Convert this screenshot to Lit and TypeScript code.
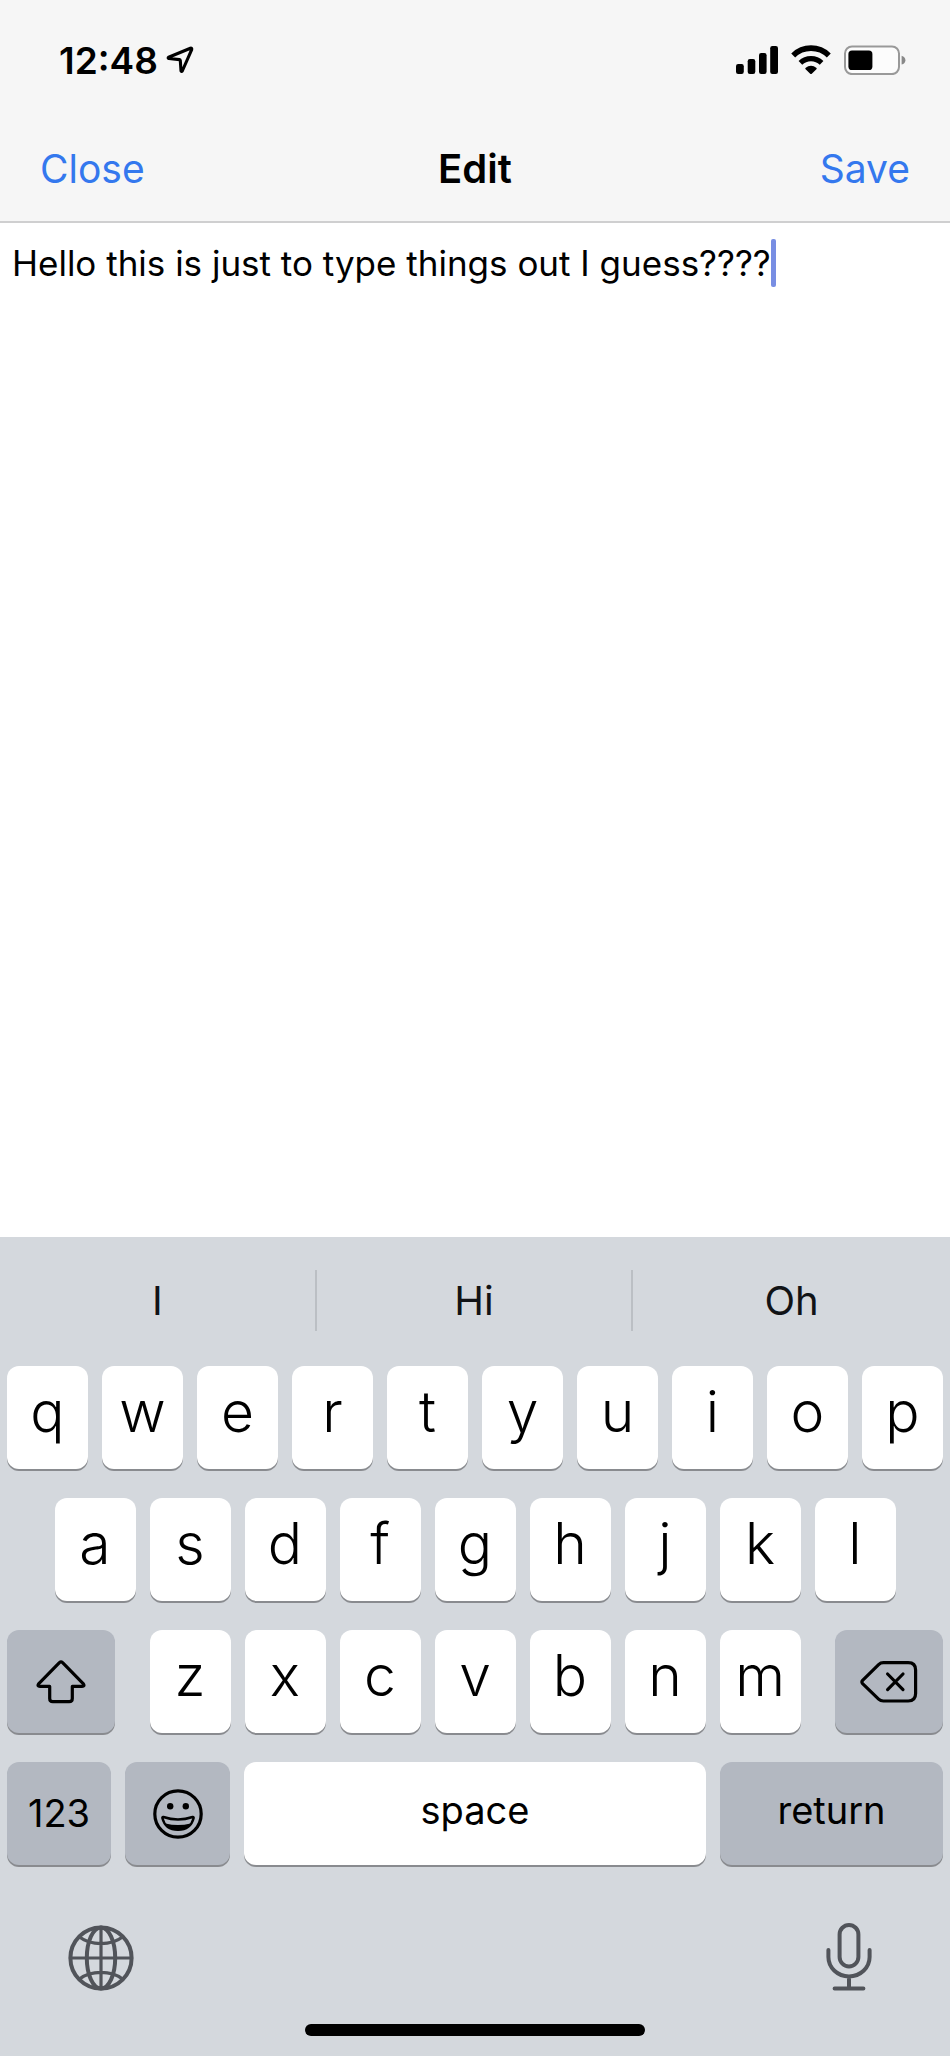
import { LitElement, html, css, svg } from "lit";
import { customElement, property, state } from "lit/decorators.js";

const shiftIcon = svg`<svg class="glyph" width="50" height="44" viewBox="0 0 50 44" aria-hidden="true">
  <path d="M23.4 2.6Q25 1.2 26.6 2.6L47.4 23.8Q49 26.2 46 26.4H36.3V38.5Q36.3 41.6 33.2 41.6H16.8Q13.7 41.6 13.7 38.5V26.4H4Q1 26.2 2.6 23.8Z" />
</svg>`;

const deleteIcon = svg`<svg class="glyph" width="58" height="42" viewBox="0 0 58 42" aria-hidden="true">
  <path d="M2.6 19.4L18.6 3.6Q20.6 1.7 23.4 1.7H48.2Q55.6 1.7 55.6 9.1V32.6Q55.6 40 48.2 40H23.4Q20.6 40 18.6 38.1L2.6 22.6Q1.2 21 2.6 19.4Z" />
  <path d="M27.6 13L43 28.6M43 13L27.6 28.6" />
</svg>`;

const emojiIcon = svg`<svg class="glyph" width="50" height="50" viewBox="0 0 50 50" aria-hidden="true">
  <circle cx="25" cy="25" r="23.2" />
  <circle class="solid" cx="17.2" cy="17.2" r="3.2" />
  <circle class="solid" cx="32.8" cy="17.2" r="3.2" />
  <path class="thin" d="M10.4 28Q25 33 39.6 28Q41 27.7 40.6 29.2Q37.6 40.8 25 40.8Q12.4 40.8 9.4 29.2Q9 27.7 10.4 28Z" />
  <path class="solid" d="M12.4 34.4Q25 37.6 37.6 34.4Q33 41 25 41Q17 41 12.4 34.4Z" />
</svg>`;

@customElement("status-bar")
export class StatusBar extends LitElement {
  static styles = css`
    :host {
      display: flex;
      align-items: center;
      justify-content: space-between;
      height: 112px;
      padding: 4px 44px 0 59px;
    }
    .clock,
    .indicators {
      display: flex;
      align-items: center;
    }
    .clock {
      gap: 8px;
      font-size: 37px;
      font-weight: 600;
    }
    .indicators {
      gap: 13px;
    }
  `;

  @property() time = "";

  render() {
    return html`
      <div class="clock">
        <time>${this.time}</time>
        <svg width="28" height="28" viewBox="0 0 28 28" aria-hidden="true">
          <path d="M24.4 2.2L2.6 11.2Q1.6 12 2.8 12.5L13.6 13.6Q14.2 13.7 14.3 14.4L15 24.8Q15.5 26 16.3 25L25.7 3.6Q26 1.9 24.4 2.2Z"
            fill="none" stroke="#000" stroke-width="3.1" stroke-linejoin="round" />
        </svg>
      </div>
      <div class="indicators">
        <svg width="42" height="30" viewBox="0 0 42 30" role="img" aria-label="Signal">
          <rect x="0" y="19" width="7.8" height="10" rx="2.2" />
          <rect x="11.7" y="14" width="7.6" height="15" rx="2.2" />
          <rect x="23" y="8" width="7.6" height="21" rx="2.2" />
          <rect x="34.2" y="1" width="7.8" height="28" rx="2.2" />
        </svg>
        <svg width="40" height="30" viewBox="0 0 40 30" role="img" aria-label="Wi-Fi">
          <path d="M2.2 10.4A25.4 25.4 0 0 1 37.8 10.4" fill="none" stroke="#000" stroke-width="5.6" />
          <path d="M9.4 17.9A15.2 15.2 0 0 1 30.6 17.9" fill="none" stroke="#000" stroke-width="5.2" />
          <path d="M14.4 23Q20 18.4 25.6 23Q26 23.6 25.4 24.2L20.8 28.8Q20 29.4 19.2 28.8L14.6 24.2Q14 23.6 14.4 23Z" />
        </svg>
        <svg width="62" height="30" viewBox="0 0 62 30" role="img" aria-label="Battery">
          <rect x="1" y="1.5" width="54" height="27.6" rx="7" fill="#fcfcfc" stroke="#999" stroke-width="2" />
          <rect x="4.4" y="5.4" width="24" height="19.6" rx="3.6" />
          <path d="M57.6 10.8Q61.4 12 61.4 15.2Q61.4 18.4 57.6 19.6Z" fill="#888" />
        </svg>
      </div>
    `;
  }
}

@customElement("nav-bar")
export class NavBar extends LitElement {
  static styles = css`
    :host {
      display: grid;
      grid-template-columns: 1fr auto 1fr;
      align-items: center;
      height: 105px;
      padding: 0 40px;
    }
    .title {
      margin: 0;
      font-size: 40px;
      font-weight: 600;
    }
    .action {
      padding: 0;
      border: 0;
      background: none;
      color: #3478ee;
      font: inherit;
      font-size: 39px;
      justify-self: start;
    }
    .primary {
      justify-self: end;
    }
  `;

  @property() heading = "";

  render() {
    return html`
      <button class="action" type="button">Close</button>
      <h1 class="title">${this.heading}</h1>
      <button class="action primary" type="button">Save</button>
    `;
  }
}

@customElement("text-editor")
export class TextEditor extends LitElement {
  static styles = css`
    :host {
      display: flex;
      background: #fff;
    }
    .page {
      flex: 1;
      display: flex;
      align-items: flex-start;
      padding: 16px 12px;
      cursor: text;
    }
    .text {
      field-sizing: content;
      flex: 0 1 auto;
      padding: 0;
      border: 0;
      outline: 0;
      resize: none;
      overflow: hidden;
      background: none;
      color: #000;
      font: inherit;
      font-size: 35px;
      line-height: 48px;
      caret-color: transparent;
    }
    .caret {
      flex: none;
      width: 5px;
      height: 48px;
      border-radius: 2px;
      background: #788ee3;
    }
  `;

  @property() value = "";

  render() {
    return html`
      <label class="page">
        <textarea class="text" rows="1" aria-label="Text" spellcheck="false" .value=${this.value}></textarea>
        <span class="caret"></span>
      </label>
    `;
  }
}

@customElement("soft-keyboard")
export class SoftKeyboard extends LitElement {
  static styles = css`
    :host {
      display: block;
      background: #d4d8dd;
    }
    button {
      margin: 0;
      padding: 0;
      border: 0;
      background: none;
      color: #000;
      font: inherit;
      cursor: pointer;
    }
    .suggestions {
      display: grid;
      grid-template-columns: repeat(3, 1fr);
      align-items: center;
      height: 126px;
    }
    .suggestion {
      height: 61px;
      color: #111316;
      font-size: 40px;
      line-height: 61px;
    }
    .suggestion:not(:last-child) {
      border-right: 2px solid #bbbfc4;
    }
    .keys {
      --gap: 14px;
      display: flex;
      flex-direction: column;
      gap: 29px;
      padding: 3px 7px 0;
    }
    .row,
    .letters {
      display: flex;
      gap: var(--gap);
    }
    .inset {
      padding: 0 calc((100% + var(--gap)) / 20);
    }
    .spread {
      justify-content: space-between;
      gap: 0;
    }
    .letters {
      width: calc((100% + var(--gap)) * 0.7 - var(--gap));
    }
    .bottom {
      display: grid;
      grid-template-columns: 104fr 105fr 462fr 223fr;
    }
    .key {
      display: flex;
      flex: 1 1 0;
      align-items: center;
      justify-content: center;
      min-width: 0;
      height: 103px;
      border-radius: 12px;
      background: #fff;
      box-shadow: 0 2px 0 #898b8f;
    }
    .letter {
      padding-bottom: 12px;
      font-size: 57px;
      font-weight: 350;
    }
    .word {
      padding-bottom: 8px;
      font-size: 38px;
    }
    .digits {
      padding-bottom: 2px;
      font-size: 38px;
    }
    .special {
      background: #b3b8c1;
    }
    .side {
      flex: none;
      width: 11.5%;
    }
    .glyph {
      fill: none;
      stroke: #000;
      stroke-width: 3.2;
      stroke-linecap: round;
      stroke-linejoin: round;
    }
    .glyph .thin {
      stroke-width: 2.4;
    }
    .glyph .solid {
      fill: #000;
      stroke: none;
    }
    .tools {
      display: flex;
      align-items: center;
      justify-content: space-between;
      height: 70px;
      padding: 58px 78px 0 68px;
    }
    .tool {
      display: flex;
    }
    .line {
      fill: none;
      stroke: #51545a;
      stroke-width: 4;
      stroke-linecap: round;
    }
    .home {
      width: 35.7%;
      height: 12px;
      margin: 0 auto;
      border-radius: 6px;
      background: #000;
    }
    .dock {
      padding: 31px 0 20px;
    }
  `;

  @property({ attribute: false }) suggestions: string[] = [];

  private letter(char: string) {
    return html`<button class="key letter" type="button">${char}</button>`;
  }

  private letters(chars: string) {
    return [...chars].map((char) => this.letter(char));
  }

  render() {
    return html`
      <div class="suggestions">
        ${this.suggestions.map((word) => html`<button class="suggestion" type="button">${word}</button>`)}
      </div>
      <div class="keys">
        <div class="row">${this.letters("qwertyuiop")}</div>
        <div class="row inset">${this.letters("asdfghjkl")}</div>
        <div class="row spread">
          <button class="key special side" type="button" aria-label="Shift">${shiftIcon}</button>
          <div class="letters">${this.letters("zxcvbnm")}</div>
          <button class="key special side" type="button" aria-label="Delete">${deleteIcon}</button>
        </div>
        <div class="row bottom">
          <button class="key special digits" type="button">123</button>
          <button class="key special" type="button" aria-label="Emoji">${emojiIcon}</button>
          <button class="key word" type="button">space</button>
          <button class="key special word" type="button">return</button>
        </div>
      </div>
      <div class="tools">
        <button class="tool" type="button" aria-label="Next keyboard">
          <svg class="line" width="66" height="66" viewBox="0 0 66 66" aria-hidden="true">
            <circle cx="33" cy="33" r="30.6" />
            <ellipse cx="33" cy="33" rx="14.2" ry="30.6" />
            <path stroke-width="3.2" d="M33 2.4V63.6M2.4 33H63.6M11.5 12Q20 18.6 33 18.6Q46 18.6 54.5 12M11.5 54Q20 47.4 33 47.4Q46 47.4 54.5 54" />
          </svg>
        </button>
        <button class="tool" type="button" aria-label="Dictation">
          <svg class="line" width="46" height="70" viewBox="0 0 46 70" aria-hidden="true">
            <rect x="13.6" y="2" width="18.8" height="41.4" rx="9.4" />
            <path d="M2.4 27V34A20.6 19.4 0 0 0 43.6 34V27M23 53.5V65.4M8.6 65.4H37.4" />
          </svg>
        </button>
      </div>
      <div class="dock"><div class="home"></div></div>
    `;
  }
}

@customElement("app-root")
export class AppRoot extends LitElement {
  static styles = css`
    :host {
      display: flex;
      flex-direction: column;
      min-height: 100vh;
      background: #fff;
      color: #000;
      font-family: Inter, "Liberation Sans", sans-serif;
    }
    .header {
      border-bottom: 2px solid #cfcfd0;
      background: #f6f6f6;
    }
    .editor {
      flex: 1;
    }
  `;

  @state() private text = "Hello this is just to type things out I guess????";

  render() {
    return html`
      <header class="header">
        <status-bar time="12:48"></status-bar>
        <nav-bar heading="Edit"></nav-bar>
      </header>
      <text-editor class="editor" .value=${this.text}></text-editor>
      <soft-keyboard .suggestions=${["I", "Hi", "Oh"]}></soft-keyboard>
    `;
  }
}
